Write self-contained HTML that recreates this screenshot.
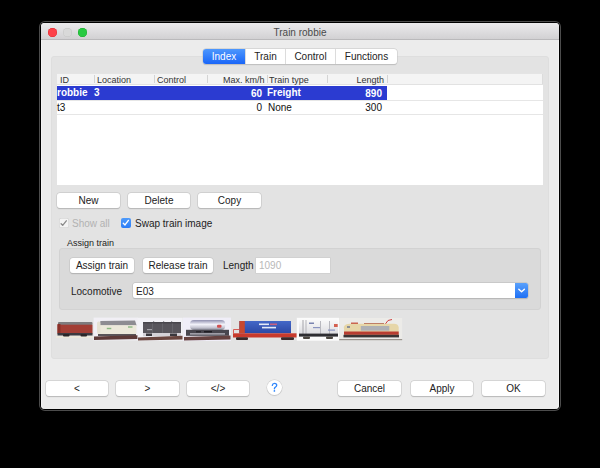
<!DOCTYPE html>
<html><head><meta charset="utf-8">
<style>
*{box-sizing:border-box;margin:0;padding:0}
html,body{width:600px;height:468px;background:#000;overflow:hidden}
body{position:relative;font-family:"Liberation Sans",sans-serif;color:#222}
.a{position:absolute}
.win{left:41px;top:23px;width:518px;height:386px;background:#ececec;border-radius:4px;box-shadow:0 0 0 1px #000,0 0 0 2px #4c4c4c,inset 1px 0 #f3f3f3,inset -1px 0 #f3f3f3;overflow:hidden}
.title{left:41px;top:23px;width:518px;height:17px;background:linear-gradient(#ebeaec,#d2d1d3);border-bottom:1px solid #bab9bb;border-radius:4px 4px 0 0}
.tl{width:9px;height:9px;border-radius:50%}
.ttext{left:41px;top:28px;width:518px;text-align:center;font-size:10px;color:#4a4a4a;line-height:10px}
.tabbox{left:51px;top:56px;width:498px;height:303px;background:#e3e3e3;border:1px solid #dedede;border-radius:3px}
.tabs{left:203px;top:49px;height:15px;display:flex;border-radius:3px;box-shadow:0 0 0 0.5px #c8c8c8,0 0.5px 1px rgba(0,0,0,.2);background:#fff;overflow:hidden}
.tab{font-size:10px;line-height:15px;text-align:center;color:#222;border-left:1px solid #dcdcdc}
.tab.sel{background:linear-gradient(#4d97fd,#1a66f8);color:#fff;border-left:none}
.table{left:57px;top:73px;width:486px;height:112px;background:#fff}
.hdr{left:57px;top:73px;width:486px;height:12px;background:#f4f4f4;border-bottom:1px solid #e2e2e2;border-top:1px solid #e4e4e4}
.hc{font-size:9px;line-height:11px;color:#333;top:74.5px;height:12px}
.sep{top:75px;width:1px;height:8px;background:#d4d4d4}
.row{left:57px;width:486px;height:15px;border-bottom:1px solid #e6e6e6}
.cell{font-size:10px;line-height:15px;color:#111;white-space:pre}
.btn{height:15px;background:#fff;border-radius:3px;box-shadow:0 0 0 0.5px #c4c4c4,0 0.5px 1px rgba(0,0,0,.25);font-size:10px;line-height:15.5px;text-align:center;color:#222}
.lbl{font-size:10px;line-height:12px;color:#222;white-space:pre}
.cb{width:10px;height:10px;border-radius:2px}
.grp{left:59px;top:247.5px;width:482px;height:62px;background:#dadada;border:1px solid #d2d2d2;border-radius:3px}
</style></head><body>
<div class="a win"></div>
<div class="a title"></div>
<div class="a tl" style="left:48px;top:28px;background:#fd4148;box-shadow:inset 0 0 0 0.5px #e0262e"></div>
<div class="a tl" style="left:63px;top:28px;background:#d9d9d9;box-shadow:inset 0 0 0 0.5px #c4c4c4"></div>
<div class="a tl" style="left:78px;top:28px;background:#28ca42;box-shadow:inset 0 0 0 0.5px #1aab2a"></div>
<div class="a ttext">Train robbie</div>

<div class="a tabbox"></div>
<div class="a tabs">
  <div class="tab sel" style="width:42px">Index</div>
  <div class="tab" style="width:40px">Train</div>
  <div class="tab" style="width:50px">Control</div>
  <div class="tab" style="width:62px">Functions</div>
</div>

<div class="a table"></div>
<div class="a hdr"></div>
<div class="a hc" style="left:60px">ID</div>
<div class="a sep" style="left:94px"></div>
<div class="a hc" style="left:97px">Location</div>
<div class="a sep" style="left:154px"></div>
<div class="a hc" style="left:157px">Control</div>
<div class="a sep" style="left:207px"></div>
<div class="a hc" style="left:208px;width:56.5px;text-align:right">Max. km/h</div>
<div class="a sep" style="left:267px"></div>
<div class="a hc" style="left:269px">Train type</div>
<div class="a sep" style="left:327px"></div>
<div class="a hc" style="left:328px;width:56px;text-align:right">Length</div>
<div class="a sep" style="left:387px"></div>
<div class="a" style="left:542px;top:74px;width:1px;height:10px;background:#dcdcdc"></div>

<div class="a row" style="top:86px;height:14px;background:#2b3bd1;width:330px;border:none"></div>
<div class="a row" style="top:100px;border-top:1px solid #e6e6e6;height:15px"></div>
<div class="a cell" style="left:57px;top:85px;color:#fff;font-weight:bold">robbie</div>
<div class="a cell" style="left:94px;top:85px;color:#fff;font-weight:bold">3</div>
<div class="a cell" style="left:208px;top:86px;width:54px;text-align:right;color:#fff;font-weight:bold">60</div>
<div class="a cell" style="left:267px;top:85px;color:#fff;font-weight:bold">Freight</div>
<div class="a cell" style="left:328px;top:86px;width:54px;text-align:right;color:#fff;font-weight:bold">890</div>
<div class="a cell" style="left:57px;top:99.5px">t3</div>
<div class="a cell" style="left:208px;top:99.5px;width:54px;text-align:right">0</div>
<div class="a cell" style="left:268px;top:99.5px">None</div>
<div class="a cell" style="left:328px;top:99.5px;width:54px;text-align:right">300</div>

<div class="a btn" style="left:57px;top:193px;width:63px">New</div>
<div class="a btn" style="left:128px;top:193px;width:62px">Delete</div>
<div class="a btn" style="left:198px;top:193px;width:63px">Copy</div>

<div class="a cb" style="left:59px;top:217.5px;background:#f4f4f4;box-shadow:inset 0 0 0 0.5px #c8c8c8"></div><svg class="a" style="left:59px;top:217.5px" width="10" height="10" viewBox="0 0 10 10"><path d="M2.1 5.7 L3.7 7.3 L7.3 2.8" fill="none" stroke="#8a8a8a" stroke-width="1.3" stroke-linecap="round" stroke-linejoin="round"/></svg>
<div class="a lbl" style="left:72px;top:218px;color:#b2b2b2">Show all</div>
<div class="a cb" style="left:121px;top:218px;background:linear-gradient(#4f9bfa,#2a7cf7)"></div><svg class="a" style="left:121px;top:218px" width="10" height="10" viewBox="0 0 10 10"><path d="M2.3 5.3 L4 6.9 L7.4 2.4" fill="none" stroke="#fff" stroke-width="1.4" stroke-linecap="round" stroke-linejoin="round"/></svg>
<div class="a lbl" style="left:135px;top:218px">Swap train image</div>

<div class="a lbl" style="left:67px;top:236.5px;font-size:9px">Assign train</div>
<div class="a grp"></div>
<div class="a btn" style="left:70px;top:258px;width:64px">Assign train</div>
<div class="a btn" style="left:143px;top:258px;width:70px">Release train</div>
<div class="a lbl" style="left:223px;top:260px">Length</div>
<div class="a" style="left:256px;top:258px;width:74px;height:15px;background:#fff;box-shadow:0 0 0 0.5px #c8c8c8"></div>
<div class="a lbl" style="left:259px;top:260px;color:#b8b8b8">1090</div>
<div class="a lbl" style="left:71px;top:286px">Locomotive</div>
<div class="a" style="left:133px;top:283px;width:395px;height:15px;background:#fff;border-radius:2px;box-shadow:0 0 0 0.5px #bdbdbd,0 0.5px 1px rgba(0,0,0,.2)"></div>
<div class="a lbl" style="left:136px;top:286px">E03</div>
<div class="a" style="left:515px;top:283px;width:13px;height:15px;background:linear-gradient(#5aa1fb,#1d6ff5);border-radius:0 2px 2px 0"></div><svg class="a" style="left:515px;top:283px" width="13" height="15" viewBox="0 0 13 15"><path d="M3.8 6.2 L6.6 8.8 L9.4 6.2" fill="none" stroke="#fff" stroke-width="1.4" stroke-linecap="round" stroke-linejoin="round"/></svg>

<svg class="a" style="left:0;top:0;filter:blur(0.35px)" width="600" height="468" viewBox="0 0 600 468">
<defs>
<linearGradient id="tank" x1="0" y1="0" x2="0" y2="1"><stop offset="0" stop-color="#8c8cac"/><stop offset="0.45" stop-color="#f2f2fa"/><stop offset="0.75" stop-color="#c8c8d4"/><stop offset="1" stop-color="#8a8a98"/></linearGradient>
<linearGradient id="cont" x1="0" y1="0" x2="0" y2="1"><stop offset="0" stop-color="#4468c8"/><stop offset="1" stop-color="#2c48a4"/></linearGradient>
<linearGradient id="shade" x1="0" y1="0" x2="0" y2="1"><stop offset="0" stop-color="#fbfbfb"/><stop offset="1" stop-color="#dcdce0"/></linearGradient>
</defs>
<!-- 1 red wagon -->
<rect x="56" y="336" width="37" height="2" fill="#ece8dc"/>
<rect x="58" y="322" width="34.5" height="3" rx="1" fill="#7e7c7e"/>
<rect x="57.5" y="324.7" width="35" height="8.8" fill="#a33e35"/>
<rect x="57.5" y="324" width="3" height="9.5" fill="#8a3028"/>
<rect x="57.5" y="333" width="35" height="2.5" fill="#3c3a40"/>
<rect x="63" y="334" width="6.5" height="2.5" rx="1" fill="#2a2628"/><rect x="80.5" y="334" width="6.5" height="2.5" rx="1" fill="#2a2628"/>
<!-- 2 white reefer -->
<rect x="93.6" y="317.6" width="44.4" height="22.8" fill="#f1eff5"/>
<path d="M99 325.5 L100.5 321 L135 320.4 L136.6 325.5 Z" fill="#8e8c92"/>
<rect x="97.6" y="325.2" width="38.8" height="9" fill="#ece8da"/>
<rect x="97" y="321.5" width="3.5" height="12" rx="1.5" fill="#e6e2d4"/>
<rect x="106.8" y="327.8" width="4.5" height="1.4" fill="#8cb884"/><rect x="128" y="326.3" width="4.5" height="1.4" fill="#8cb884"/>
<rect x="98" y="334" width="38" height="2" fill="#5a5458"/>
<path d="M94 336.5 L137.6 335.2 L137.6 339 L94 340 Z" fill="#5e3a38"/>
<!-- 3 dark wagon -->
<rect x="137.7" y="317.8" width="45" height="22.9" fill="#f3f2f7"/>
<rect x="143" y="322" width="38" height="11.2" fill="#58555c"/>
<rect x="143" y="322" width="38" height="1.5" fill="#48464c"/>
<rect x="153" y="321" width="1.2" height="1" fill="#9a98a0"/><rect x="163" y="321" width="1.2" height="1" fill="#9a98a0"/><rect x="171" y="321" width="1.2" height="1" fill="#9a98a0"/><rect x="152" y="323.5" width="0.8" height="9.5" fill="#6a686e"/><rect x="162" y="323.5" width="0.8" height="9.5" fill="#6a686e"/><rect x="172" y="323.5" width="0.8" height="9.5" fill="#6a686e"/><rect x="147" y="329" width="5" height="1.2" fill="#a4a2a8"/>
<rect x="143" y="333.2" width="38" height="3" fill="#d4d2d8"/>
<rect x="146" y="333.5" width="6" height="2.5" fill="#3a383e"/><rect x="170" y="333.5" width="7" height="2.5" fill="#3a383e"/>
<path d="M138 337.5 L182.5 335.8 L182.5 339.5 L138 340.5 Z" fill="#6a4640"/>
<!-- 4 silver tank -->
<rect x="183" y="317.6" width="48" height="23.4" fill="#f0eef8"/>
<rect x="190" y="319.9" width="35.2" height="10" rx="4" fill="url(#tank)"/>
<rect x="217" y="324.8" width="4.5" height="3" rx="1" fill="#d05050"/>
<rect x="186" y="329.8" width="43" height="6" fill="#48464e"/>
<rect x="196" y="331" width="5" height="1.5" fill="#2a282e"/><rect x="204" y="331" width="8" height="1.5" fill="#1e1c22"/>
<rect x="190" y="333.3" width="35" height="1.2" fill="#c4c2cc"/>
<path d="M184 337 L230.5 335.5 L230.5 339.5 L184 340.5 Z" fill="#664240"/>
<!-- 5 container wagon -->
<rect x="239.3" y="321" width="51.7" height="12.3" fill="url(#cont)"/>
<rect x="239.3" y="321" width="5.5" height="12.3" fill="#c8482e"/>
<rect x="259" y="323.5" width="10" height="1.6" fill="#e4eaf8"/><rect x="270" y="323.5" width="7" height="1.6" fill="#c86080"/><rect x="262" y="326.8" width="14" height="1.6" fill="#e4eaf8"/>
<rect x="233" y="333.3" width="63.7" height="4.2" fill="#c83a2c"/>
<path d="M233.5 333.5 L233.5 329.5 L239.3 329.5" fill="none" stroke="#d85048" stroke-width="0.9"/>
<rect x="236" y="337.3" width="12" height="2.6" rx="1" fill="#3a2a2a"/><rect x="281" y="337.3" width="13" height="2.6" rx="1" fill="#3a2a2a"/>
<!-- 6 white box wagon -->
<rect x="296.8" y="317.8" width="42.2" height="22.9" fill="#fbfbfb"/>
<path d="M299 334.4 L299 321 Q299 319 302 319 L335 319 Q338 319 338 322 L338 334.4 Z" fill="url(#shade)"/>
<rect x="302.5" y="320" width="1" height="14" fill="#a4a4aa"/><rect x="305.5" y="320" width="1" height="14" fill="#b4b4ba"/>
<rect x="320" y="321" width="1" height="13" fill="#b8b8be"/><rect x="329" y="321" width="1" height="13" fill="#b8b8be"/>
<rect x="309" y="322.5" width="5" height="1.5" fill="#7a84b0"/><rect x="313" y="327" width="7" height="1.2" fill="#8a94c0"/><rect x="328" y="329.5" width="7" height="1.2" fill="#8a94c0"/>
<rect x="334" y="324" width="3.7" height="3" fill="#d46050"/>
<rect x="299" y="333.6" width="39" height="3" fill="#2e2e32"/>
<rect x="303" y="336.5" width="7" height="2.5" rx="1" fill="#4a4640"/><rect x="326" y="336.5" width="7" height="2.5" rx="1" fill="#4a4640"/>
<!-- 7 locomotive -->
<rect x="339.2" y="318" width="63" height="22" fill="#ecebe8"/>
<rect x="339.2" y="339" width="63" height="1.2" fill="#9a948e"/>
<path d="M385 324.5 L388 320.5 L392 319.5" fill="none" stroke="#d04040" stroke-width="1"/>
<rect x="351" y="322.6" width="7" height="1.6" fill="#c04030"/><rect x="364" y="323" width="20" height="1.2" fill="#b06050"/>
<path d="M344.5 335 L343.8 327 Q345 323.7 350 323.7 L394 323.7 Q398.5 324 398.7 327.5 L398.7 335 Z" fill="#e6d6a8"/>
<rect x="360.8" y="326" width="28.5" height="4.7" fill="#aeb0b4"/>
<rect x="347" y="326" width="3" height="2" fill="#8a8e98"/>
<rect x="344" y="331.5" width="54.7" height="3.3" fill="#b83c30"/>
<rect x="343.5" y="334.8" width="55.5" height="2.6" fill="#3a3434"/>
</svg>
<div class="a btn" style="left:46px;top:381px;width:62px">&lt;</div>
<div class="a btn" style="left:116px;top:381px;width:63px">&gt;</div>
<div class="a btn" style="left:187px;top:381px;width:62px">&lt;/&gt;</div>
<div class="a" style="left:267px;top:380px;width:15px;height:15px;border-radius:50%;background:#fff;box-shadow:0 0 0 0.5px #cacaca,0 0.7px 1px rgba(0,0,0,.2)"></div><svg class="a" style="left:267px;top:380px" width="15" height="15" viewBox="0 0 15 15"><path d="M5.3 5.4 Q5.6 3.4 7.5 3.4 Q9.7 3.4 9.7 5.3 Q9.7 6.4 8.4 7.1 Q7.4 7.6 7.4 8.8" fill="none" stroke="#2f86fb" stroke-width="1.35" stroke-linecap="round"/><circle cx="7.4" cy="10.9" r="0.85" fill="#2f86fb"/></svg>
<div class="a btn" style="left:338px;top:381px;width:63px">Cancel</div>
<div class="a btn" style="left:411px;top:381px;width:62px">Apply</div>
<div class="a btn" style="left:482px;top:381px;width:63px">OK</div>
</body></html>
